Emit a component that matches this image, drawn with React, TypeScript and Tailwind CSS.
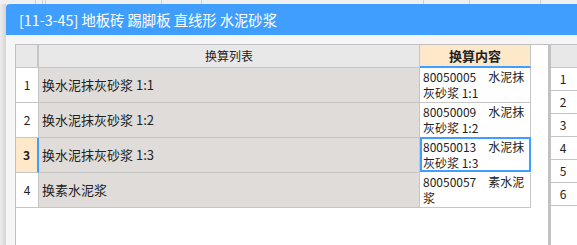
const rows = [
  { no: 1, name: "换水泥抹灰砂浆 1:1", code: "80050005", l1: "水泥抹", l2: "灰砂浆 1:1" },
  { no: 2, name: "换水泥抹灰砂浆 1:2", code: "80050009", l1: "水泥抹", l2: "灰砂浆 1:2" },
  { no: 3, name: "换水泥抹灰砂浆 1:3", code: "80050013", l1: "水泥抹", l2: "灰砂浆 1:3" },
  { no: 4, name: "换素水泥浆", code: "80050057", l1: "素水泥", l2: "浆" },
];

const bgCols = ["w-[36px]", "w-[7px]", "w-[3px]", "w-[116px]", "w-[40px]", "w-[222px]", "w-[46px]", "w-[71px]"];

const font = { fontFamily: '"Noto Sans CJK SC", "Noto Sans", sans-serif' };

export default function App() {
  const selected = 3;
  return (
    <div className="w-[577px] h-[245px] overflow-hidden flex flex-col bg-[#e4e4e4] text-[#222]" style={font}>
      {/* page behind the dialog */}
      <div className="h-[4px] flex bg-[#f0f0f0] shrink-0">
        {bgCols.map((w, i) => (
          <div key={i} className={`${w} h-full border-r border-[#cfcfcf]`} />
        ))}
      </div>

      <div className="flex flex-1 min-h-0">
        <div className="w-[6px] bg-gradient-to-r from-[#ededed] to-[#d5d5d5]" />

        {/* dialog */}
        <div className="flex-1 flex flex-col rounded-tl-[4px] overflow-hidden bg-[#f5f5f5]">
          <div className="h-[31px] shrink-0 bg-[#409eff] text-white text-[14.3px] pl-[13px] flex items-center whitespace-nowrap">
            [11-3-45] 地板砖 踢脚板 直线形 水泥砂浆
          </div>

          <div className="flex-1 flex pt-[9px] pl-[9px] min-h-0">
            {/* main table */}
            <div className="w-[533px] shrink-0 border-l border-t border-[#c0c0c0] bg-white flex">
              <div className="grid grid-cols-[23px_381px_111px] auto-rows-min content-start">
                <div className="h-[23px] bg-[#e8e8e8] border-r-2 border-b border-[#c6c6c6]" />
                <div className="h-[23px] bg-[#e8e8e8] border-r border-b border-[#c6c6c6] flex items-center justify-center text-[12px]">
                  换算列表
                </div>
                <div className="h-[23px] bg-[#fde8ca] border-r border-[#c6c6c6] border-b-2 border-b-[#409eff] flex items-center justify-center text-[13px] font-bold">
                  换算内容
                </div>

                {rows.map((r) => {
                  const sel = r.no === selected;
                  return [
                    <div
                      key={`n${r.no}`}
                      className={
                        sel
                          ? "h-[35px] bg-[#fde8ca] border-r-2 border-r-[#409eff] border-b border-b-[#c6c6c6] flex items-center justify-center text-[12px] font-bold"
                          : "h-[35px] bg-white border-r border-b border-[#c6c6c6] flex items-center justify-center text-[12px]"
                      }
                    >
                      {r.no}
                    </div>,
                    <div
                      key={`a${r.no}`}
                      className="h-[35px] bg-[#e0dcd9] border-r border-b border-[#c6c6c6] flex items-center pl-[3px] text-[13px] whitespace-nowrap"
                    >
                      {r.name}
                    </div>,
                    <div
                      key={`b${r.no}`}
                      className={
                        sel
                          ? "h-[35px] bg-white border-2 border-[#409eff] -mt-px flex items-center pl-[1px]"
                          : "h-[35px] bg-white border-r border-b border-[#c6c6c6] flex items-center pl-[3px]"
                      }
                    >
                      <p className="text-[12px] leading-[16px] whitespace-nowrap">
                        {r.code}
                        {"\u3000"}
                        {r.l1}
                        <br />
                        {r.l2}
                      </p>
                    </div>,
                  ];
                })}
              </div>
              <div className="flex-1" />
            </div>

            {/* splitter */}
            <div className="w-[3px] shrink-0 bg-[#c2c2c2]" />

            {/* right table */}
            <div className="flex-1 bg-white border-t border-[#c0c0c0] flex flex-col">
              <div className="h-[23px] bg-[#e8e8e8] border-b border-[#c6c6c6]" />
              {[1, 2, 3, 4, 5, 6].map((n) => (
                <div key={n} className="h-[23px] border-b border-[#c6c6c6] flex items-center">
                  <span className="w-[24px] text-center text-[12px]">{n}</span>
                </div>
              ))}
            </div>
          </div>
        </div>
      </div>
    </div>
  );
}
